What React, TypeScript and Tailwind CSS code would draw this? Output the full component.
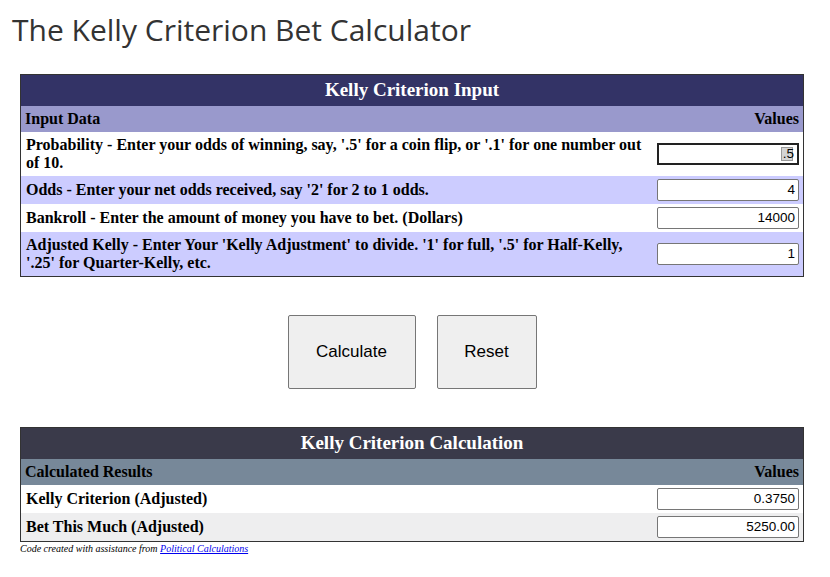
import React from "react";

const serif = "font-['Liberation_Serif','Times_New_Roman',serif]";
const sans = "font-['Liberation_Sans',Arial,sans-serif]";

type Row = { label: string; value: string; bg: string; tall?: boolean; focused?: boolean };

const inputRows: Row[] = [
  {
    label: "Probability - Enter your odds of winning, say, '.5' for a coin flip, or '.1' for one number out of 10.",
    value: ".5",
    bg: "bg-white",
    tall: true,
    focused: true,
  },
  { label: "Odds - Enter your net odds received, say '2' for 2 to 1 odds.", value: "4", bg: "bg-[#ccccff]" },
  { label: "Bankroll - Enter the amount of money you have to bet. (Dollars)", value: "14000", bg: "bg-white" },
  {
    label: "Adjusted Kelly - Enter Your 'Kelly Adjustment' to divide. '1' for full, '.5' for Half-Kelly, '.25' for Quarter-Kelly, etc.",
    value: "1",
    bg: "bg-[#ccccff]",
    tall: true,
  },
];

const resultRows: Row[] = [
  { label: "Kelly Criterion (Adjusted)", value: "0.3750", bg: "bg-white" },
  { label: "Bet This Much (Adjusted)", value: "5250.00", bg: "bg-[#eeeeef]" },
];

function ValueBox({ value, focused }: { value: string; focused?: boolean }) {
  return (
    <div
      className={`relative w-[142px] h-[22px] bg-white flex items-center justify-end pr-[3px] text-[13.5px] text-black ${sans} ${
        focused ? "border-2 border-[#222]" : "border border-[#767676] rounded-[2px]"
      }`}
    >
      {focused && (
        <span className="absolute right-[4px] top-[2px] w-[12px] h-[14px] bg-[#d4d4d4] border border-[#999]" />
      )}
      <span className="relative">{value}</span>
    </div>
  );
}

function DataRow({ row }: { row: Row }) {
  return (
    <div className={`flex items-center ${row.bg} ${row.tall ? "h-[44px]" : "h-[28px]"}`}>
      <div className={`flex-1 pl-[5px] pr-[12px] text-[16px] leading-[18px] font-bold text-black ${serif}`}>
        {row.label}
      </div>
      <div className="pr-[4px]">
        <ValueBox value={row.value} focused={row.focused} />
      </div>
    </div>
  );
}

function Panel({
  title,
  sub,
  headBg,
  subBg,
  rows,
}: {
  title: string;
  sub: string;
  headBg: string;
  subBg: string;
  rows: Row[];
}) {
  return (
    <div className="ml-[20px] w-[784px] border border-[#333]">
      <div className={`${headBg} h-[31px] flex items-center justify-center text-white text-[19px] font-bold ${serif}`}>
        {title}
      </div>
      <div className={`${subBg} h-[26px] flex items-center justify-between px-[4px] text-[16px] font-bold text-black ${serif}`}>
        <span>{sub}</span>
        <span>Values</span>
      </div>
      {rows.map((r) => (
        <DataRow key={r.label} row={r} />
      ))}
    </div>
  );
}

export default function App() {
  return (
    <div className="w-[830px] h-[577px] bg-white overflow-hidden">
      <h1 className="pl-[12px] pt-[10px] text-[30px] leading-[40px] text-[#333] font-['Open_Sans',sans-serif]">
        The Kelly Criterion Bet Calculator
      </h1>

      <div className="mt-[24px]">
        <Panel
          title="Kelly Criterion Input"
          sub="Input Data"
          headBg="bg-[#333366]"
          subBg="bg-[#9999cc]"
          rows={inputRows}
        />
      </div>

      <div className="flex justify-center gap-[21px] mt-[38px] ml-[-6px]">
        <button className={`w-[128px] h-[74px] bg-[#efefef] border border-[#767676] rounded-[2px] text-[17px] text-black ${sans}`}>
          Calculate
        </button>
        <button className={`w-[100px] h-[74px] bg-[#efefef] border border-[#767676] rounded-[2px] text-[17px] text-black ${sans}`}>
          Reset
        </button>
      </div>

      <div className="mt-[38px]">
        <Panel
          title="Kelly Criterion Calculation"
          sub="Calculated Results"
          headBg="bg-[#3a3a4a]"
          subBg="bg-[#778899]"
          rows={resultRows}
        />
      </div>

      <p className={`pl-[20px] mt-[1px] text-[10px] leading-[12px] italic text-black ${serif}`}>
        Code created with assistance from{" "}
        <a href="#" className="text-[#0000ee] underline">
          Political Calculations
        </a>
      </p>
    </div>
  );
}
